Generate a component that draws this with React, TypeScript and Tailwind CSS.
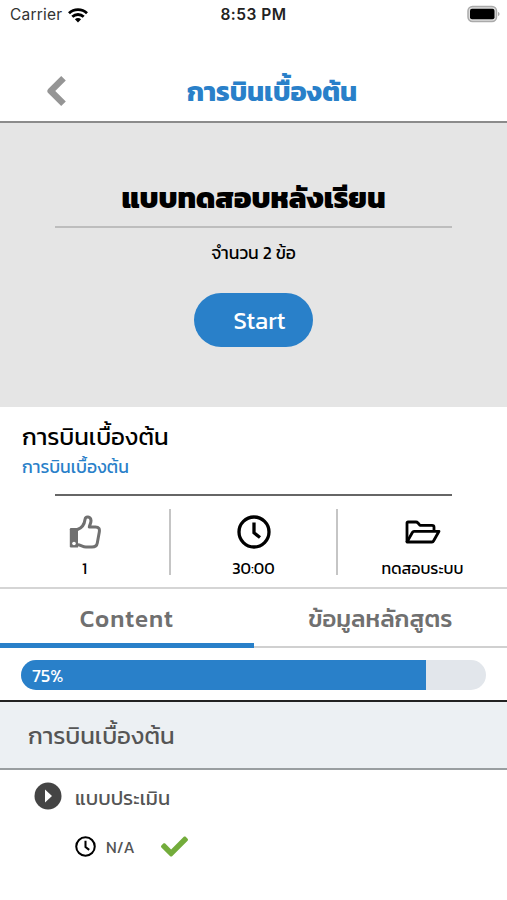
import React from 'react';
import { FaCheck } from 'react-icons/fa';

const StatusBar = () => (
  <div className="h-[30px] px-[10px] flex items-center justify-between font-['Inter','Liberation_Sans',sans-serif]">
    <div className="w-[200px] flex items-center gap-[6px]">
      <span className="text-[15.5px] tracking-[0.2px] text-[#333]">Carrier</span>
      <svg width="20" height="15" viewBox="0 0 20 15" fill="none" stroke="black" strokeWidth="2.8">
        <path d="M1 5.2C6 .4 14 .4 19 5.2" />
        <path d="M4.3 8.8C7.5 5.7 12.5 5.7 15.7 8.8" />
        <path d="M6.9 11.2C8.7 9.6 11.3 9.6 13.1 11.2L10 14.5Z" fill="black" stroke="none" />
      </svg>
    </div>
    <span className="text-[15.5px] font-semibold tracking-[0.5px] text-[#222]">8:53 PM</span>
    <div className="w-[200px] flex justify-end">
      <svg width="34" height="18" viewBox="0 0 34 18" className="-mr-[4px] -mt-[2px]">
        <rect x="1" y="1.5" width="28.5" height="15" rx="4.5" fill="#ddd" stroke="#aaa" strokeWidth="1.5" />
        <rect x="3" y="3.8" width="24.5" height="10.4" rx="2" fill="black" />
        <path d="M31 7v4c2-.6 2-3.4 0-4z" fill="#aaa" />
      </svg>
    </div>
  </div>
);

const BackIcon = () => (
  <svg width="20" height="32" viewBox="0 0 20 32" fill="none" stroke="#959595" strokeWidth="6.5" strokeLinejoin="round">
    <path d="M17.5 3.2L4.7 16L17.5 28.8" />
  </svg>
);

const ThumbIcon = () => (
  <svg width="32" height="34" viewBox="0 0 32 34" fill="none" stroke="#707070" strokeWidth="3" strokeLinejoin="round">
    <path d="M8.5 14.5C12.5 13 15.5 9 16 4.5C16.6 1 21.6 1.3 22 5.5C22.1 8 20.8 9.5 20.3 12H26.5C30 12 30.8 14 30.3 17L28.3 28C27.8 31 26 32 23 32H17C13.5 32 12 30 8.5 29.8" />
    <path d="M2 13H9V32.5H2Q.8 32.5 .8 31.3V14.2Q.8 13 2 13Z" fill="#707070" stroke="none" />
    <circle cx="5" cy="28.5" r="1.8" fill="white" stroke="none" />
  </svg>
);

const ClockIcon = ({ size }: { size: number }) => (
  <svg width={size} height={size} viewBox="0 0 34 34" fill="none" stroke="black" strokeWidth="3.3">
    <circle cx="17" cy="17" r="15" />
    <path d="M17 7.5V17.8L23 22.5" />
  </svg>
);

const FolderIcon = () => (
  <svg width="36" height="24" viewBox="0 0 36 24" fill="none" stroke="black" strokeWidth="2.8" strokeLinejoin="round">
    <path d="M2 22V3Q2 2 3 2H11Q12 2 13 3L15 5.3H27Q29 5.3 29 7V11" />
    <path d="M2 22L7.5 12.3Q8 11.3 9 11.3H34L28.8 20.5Q28 22 27 22Z" />
  </svg>
);

const App = () => {
  return (
    <div className="w-[507px] h-[900px] bg-white overflow-hidden font-['Kanit','Noto_Sans_Thai','Noto_Sans',sans-serif] text-black">
      <StatusBar />

      {/* Header */}
      <header className="h-[93px] border-b-2 border-[#8b8b8b] pt-[31px] flex items-center">
        <div className="w-[112px] flex justify-center">
          <BackIcon />
        </div>
        <h1 className="w-[320px] text-center text-[27px] leading-none font-bold text-[#2980c9] whitespace-nowrap">การบินเบื้องต้น</h1>
      </header>

      {/* Post-test */}
      <section className="h-[284px] bg-[#e5e5e5] px-[55px] flex flex-col items-center">
        <div className="w-full h-[105px] pt-[45px] border-b-2 border-[#bdbdbd] flex items-center justify-center">
          <h2 className="text-[29px] leading-none font-extrabold whitespace-nowrap">แบบทดสอบหลังเรียน</h2>
        </div>
        <p className="h-[51px] flex items-center text-[17.5px] leading-none">จำนวน 2 ข้อ</p>
        <button className="mt-[14px] w-[119px] h-[54px] rounded-full bg-[#2980c9] pl-[12px] pt-[2px] text-[24px] text-white">Start</button>
      </section>

      {/* Course summary */}
      <section className="h-[182px] border-b-2 border-[#d5d5d5]">
        <div className="pl-[22px] pt-[16px]">
          <p className="h-[28px] flex items-center text-[24px] leading-none">การบินเบื้องต้น</p>
          <p className="h-[33px] flex items-center text-[17.5px] leading-none text-[#2980c9]">การบินเบื้องต้น</p>
        </div>
        <div className="mx-[55px] mt-[10px] h-[2px] bg-[#666]" />
        <div className="mt-[13px] h-[66px] grid grid-cols-[171px_167px_169px] grid-rows-[66px] text-[16px]">
          <div className="border-r-2 border-[#c5c5c5] flex flex-col items-center">
            <div className="h-[46px] flex items-center"><ThumbIcon /></div>
            <span className="h-[20px] leading-[27px]">1</span>
          </div>
          <div className="border-r-2 border-[#c5c5c5] flex flex-col items-center">
            <div className="h-[46px] flex items-center"><ClockIcon size={34} /></div>
            <span className="h-[20px] leading-[27px]">30:00</span>
          </div>
          <div className="flex flex-col items-center">
            <div className="h-[46px] flex items-center"><FolderIcon /></div>
            <span className="h-[20px] leading-[27px]">ทดสอบระบบ</span>
          </div>
        </div>
      </section>

      {/* Tabs */}
      <nav className="h-[59px] grid grid-cols-2 text-[24px] font-medium text-[#707070]">
        <div className="border-b-[5px] border-[#2980c9] pt-[6px] flex items-center justify-center tracking-[1px]">Content</div>
        <div className="h-[59px] border-b-2 border-[#d0d0d0] pt-[2px] flex items-center justify-center">ข้อมูลหลักสูตร</div>
      </nav>

      {/* Progress */}
      <div className="h-[54px] pt-[12px] px-[21px] border-b-2 border-[#222]">
        <div className="h-[30px] rounded-full overflow-hidden bg-[#e2e6eb]">
          <div className="w-[405px] h-full pl-[11px] flex items-center bg-[#2980c9] text-[18px] text-white">75%</div>
        </div>
      </div>

      {/* Lessons */}
      <div className="h-[68px] pl-[28px] pt-[2px] flex items-center border-b-2 border-[#999ea0] bg-[#ecf0f3] text-[24px] text-[#555]">การบินเบื้องต้น</div>
      <div className="pt-[12px] pl-[34px] flex items-center gap-[13px] text-[#555]">
        <svg width="28" height="28" viewBox="0 0 28 28" className="-mt-[2px]">
          <circle cx="14" cy="14" r="13.5" fill="#444" />
          <path d="M11 7.5L18 14L11 20.5Z" fill="white" />
        </svg>
        <span className="pt-[3px] text-[20px] leading-[26px]">แบบประเมิน</span>
      </div>
      <div className="mt-[22px] pl-[75px] flex items-center text-[#555]">
        <ClockIcon size={21} />
        <span className="ml-[10px] w-[55px] text-[16px] leading-[26px]">N/A</span>
        <FaCheck size={27} color="#73ac3b" />
      </div>
    </div>
  );
};

export default App;
